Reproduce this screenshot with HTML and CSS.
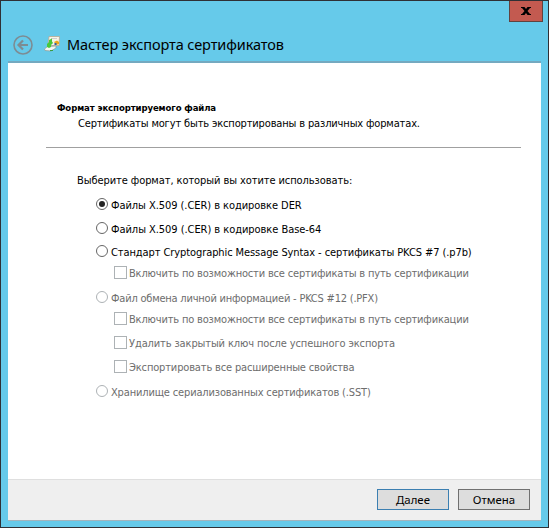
FILE: index.html
```html
<!DOCTYPE html>
<html lang="ru">
<head>
<meta charset="utf-8">
<title>Мастер экспорта сертификатов</title>
<link rel="stylesheet" href="styles.css">
</head>
<body>
<div class="window">
  <header class="titlebar">
    <svg class="back" width="20" height="20" viewBox="0 0 20 20"><circle cx="10" cy="10" r="9"/><path d="M15 10H6M10 5.500L5.500 10L10 14.500"/></svg>
    <svg class="cert" width="17" height="17" viewBox="0 0 17 17"><path fill="#f7f4e9" stroke="#b9aa91" stroke-width=".8" d="M5 .5h10.500l-.5 9H4z"/><path stroke="#d0d0cc" d="M7 2.500h6"/><path fill="#f6f6f2" stroke="#8e9991" stroke-width=".7" d="M.5 13l3-2.500 8.500-.5v2l-5 3-6-.5z"/><path fill="#49c83b" d="M3 11V8l2-2V4l3-1.500v3L9 7 7 9v2l-2 1z"/><path fill="#efa51b" d="M10 6l3-1.500L15 6v2l-3 1z"/><path fill="#315fa3" d="M10.500 7h2v2h-2z"/><path stroke="#3a9d42" d="M6 14.500h3"/></svg>
    <h1 class="caption">Мастер экспорта сертификатов</h1>
    <button class="close" aria-label="Закрыть"><svg width="10" height="8" viewBox="0 0 10 8"><path d="M0 0h3.500L5 2l1.500-2H10v1H9L6.500 4L9 7h1v1H6.500L5 6L3.500 8H0V7h1l2.500-3L1 1H0z"/></svg></button>
  </header>
  <main class="page">
    <h2 class="heading">Формат экспортируемого файла</h2>
    <p class="sub">Сертификаты могут быть экспортированы в различных форматах.</p>
    <hr class="rule">
    <p class="prompt">Выберите формат, который вы хотите использовать:</p>
    <div class="options">
      <label class="row der"><i class="radio on"></i><span>Файлы X.509 (.CER) в кодировке DER</span></label>
      <label class="row base64"><i class="radio"></i><span>Файлы X.509 (.CER) в кодировке Base-64</span></label>
      <label class="row pkcs7"><i class="radio"></i><span>Стандарт Cryptographic Message Syntax - сертификаты PKCS #7 (.p7b)</span></label>
      <label class="row off child chain"><i class="check"></i><span>Включить по возможности все сертификаты в путь сертификации</span></label>
      <label class="row off pfx"><i class="radio"></i><span>Файл обмена личной информацией - PKCS #12 (.PFX)</span></label>
      <label class="row off child chain"><i class="check"></i><span>Включить по возможности все сертификаты в путь сертификации</span></label>
      <label class="row off child remove"><i class="check"></i><span>Удалить закрытый ключ после успешного экспорта</span></label>
      <label class="row off child extended"><i class="check"></i><span>Экспортировать все расширенные свойства</span></label>
      <label class="row off sst"><i class="radio"></i><span>Хранилище сериализованных сертификатов (.SST)</span></label>
    </div>
  </main>
  <footer class="footer">
    <button class="btn primary">Далее</button>
    <button class="btn">Отмена</button>
  </footer>
</div>
</body>
</html>
```
FILE: styles.css
```css
* { box-sizing: border-box; }
body { margin: 0; font: 11px/16px "DejaVu Sans Condensed", "Noto Sans", sans-serif; color: #000; }
h1, h2, p, hr { margin: 0; font-weight: normal; white-space: nowrap; }
.window { width: 549px; height: 528px; border: 1px solid #2f3035; background: #66caea; padding: 0 7px 6px; display: flex; flex-direction: column; }
.titlebar { height: 62px; flex: none; display: flex; align-items: flex-start; position: relative; border-bottom: 2px solid #74a9c0; }
.back { margin: 34px 0 0 5px; fill: none; stroke: #7d8c93; stroke-width: 1.6; }
.back path { stroke-width: 2.2; }
.cert { margin: 35px 0 0 11px; fill: none; }
.caption { margin: 33px 0 0 6px; font: 14.5px/20px "Noto Sans", sans-serif; letter-spacing: -.1px; }
.close { position: absolute; right: -2px; top: 0; width: 34px; height: 21px; padding: 0; border: 1px solid #61423f; border-top: 0; background: #c35a50; display: grid; place-items: center; }
.page { flex: 1; background: #fff; padding: 37px 20px 0 38px; }
.heading { font-size: 9.5px; font-weight: bold; padding-left: 11px; letter-spacing: -.1px; }
.sub { padding-left: 32px; letter-spacing: -.145px; }
.rule { border: 0; height: 1px; background: #a0a0a0; margin: 15px 0 25px; }
.prompt { padding-left: 31px; letter-spacing: -.08px; }
.options { margin: 8px 0 0 50px; display: grid; grid-template-rows: 24px 23px 21px 25px 21px 24px 24px 25px 16px; }
.row { display: flex; align-items: flex-start; white-space: nowrap; }
.row span { margin: 1px 0 -1px 3px; }
.child span { margin-left: 2px; }
.der { letter-spacing: -.06px; }
.base64 { letter-spacing: -.05px; }
.pkcs7 { letter-spacing: -.09px; }
.chain { letter-spacing: -.17px; }
.pfx { letter-spacing: -.21px; }
.remove { letter-spacing: -.12px; }
.extended { letter-spacing: -.15px; }
.sst { letter-spacing: -.155px; }
.off { color: #6d6d6d; }
.child { margin-left: 18px; }
.radio { width: 12px; height: 12px; margin-top: 1px; border: 1px solid #666; border-radius: 50%; display: grid; place-items: center; }
.on::after { content: ""; width: 6px; height: 6px; border-radius: 50%; background: #222; }
.check { width: 13px; height: 13px; margin-top: 1px; border: 1px solid #adb2b5; }
.off .radio { border-color: #adb2b5; }
.footer { height: 42px; flex: none; background: #efefef; border-top: 1px solid #dfdfdf; border-bottom: 1px solid #a3b4bd; display: flex; justify-content: flex-end; padding: 9px 11px 0 0; gap: 9px; }
.btn { width: 72px; height: 21px; padding: 0; border: 1px solid #707070; background: #ddd; font: 11.4px/18px "Noto Sans", sans-serif; }
.primary { border-color: #3c7fb1; }
```
